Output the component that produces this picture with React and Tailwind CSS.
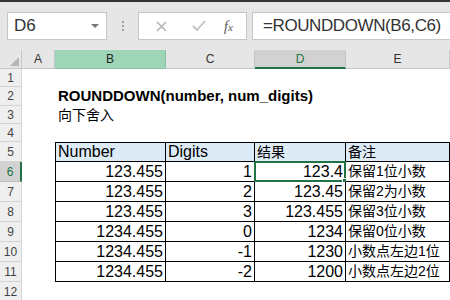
import React from 'react';

const latin = { fontFamily: '"Liberation Sans", "Noto Sans CJK SC", sans-serif' };

const cols = [
    { key: 'A', w: 'w-[33px]' },
    { key: 'B', w: 'w-[111px]' },
    { key: 'C', w: 'w-[89px]' },
    { key: 'D', w: 'w-[91px]' },
    { key: 'E', w: 'w-[104px]' },
];

const rows = [
    ['123.455', '1', '123.4', '保留1位小数'],
    ['123.455', '2', '123.45', '保留2为小数'],
    ['123.455', '3', '123.455', '保留3位小数'],
    ['1234.455', '0', '1234', '保留0位小数'],
    ['1234.455', '-1', '1230', '小数点左边1位'],
    ['1234.455', '-2', '1200', '小数点左边2位'],
];

function RowHead({ n, h, active }) {
    return (
        <div
            className={`w-[22px] shrink-0 ${h} flex items-center justify-center text-[12px] border-b border-r ${active ? 'bg-[#d2d2d2] text-[#217346] border-r-2 border-r-[#217346] border-b-[#bdbdbd]' : 'bg-[#efefef] text-[#444] border-[#d4d4d4]'}`}
        >
            {n}
        </div>
    );
}

function FormulaBar() {
    return (
        <div className="h-[50px] bg-[#e6e6e6] border-t-2 border-[#333] flex pt-[10px] pl-[7px]">
            <div className="w-[100px] h-[28px] bg-white border border-[#c6c6c6] flex items-center justify-between pl-[6px] pr-[7px]">
                <span className="text-[17px] text-[#333]">D6</span>
                <span className="w-0 h-0 border-l-[4px] border-r-[4px] border-t-[4px] border-l-transparent border-r-transparent border-t-[#777]"></span>
            </div>
            <div className="w-[31px] h-[28px] flex flex-col items-center justify-center gap-[2px]">
                <span className="w-[2px] h-[2px] bg-[#a0a0a0]"></span>
                <span className="w-[2px] h-[2px] bg-[#a0a0a0]"></span>
                <span className="w-[2px] h-[2px] bg-[#a0a0a0]"></span>
            </div>
            <div className="w-[109px] h-[28px] bg-white border border-[#c6c6c6] flex items-center justify-around px-[4px]">
                <svg width="11" height="11" viewBox="0 0 11 11" className="ml-[4px]">
                    <path d="M1 1 L10 10 M10 1 L1 10" stroke="#b4b4b4" strokeWidth="1.6" />
                </svg>
                <svg width="14" height="12" viewBox="0 0 14 12" className="ml-[6px]">
                    <path d="M1 6 L5 10 L13 1" stroke="#c2c2c2" strokeWidth="1.8" fill="none" />
                </svg>
                <span className="text-[14px] italic text-[#555] font-['Liberation_Serif',serif]">
                    f<span className="text-[11px]">x</span>
                </span>
            </div>
            <div className="ml-[5px] flex-1 h-[28px] bg-white border border-[#c6c6c6] border-r-0 flex items-center pl-[10px]">
                <span className="text-[17px] text-[#333] tracking-[-0.4px]">=ROUNDDOWN(B6,C6)</span>
            </div>
        </div>
    );
}

function ColHeads() {
    return (
        <div className="flex h-[19px] bg-[#e6e6e6]">
            <div className="w-[22px] shrink-0 bg-[#e6e6e6] border-r border-b border-[#c6c6c6] flex items-end justify-end pr-[2px] pb-[2px]">
                <svg width="9" height="9" viewBox="0 0 10 10">
                    <path d="M10 0 L10 10 L0 10 Z" fill="#b5b5b5" />
                </svg>
            </div>
            {cols.map((c) => (
                <div
                    key={c.key}
                    className={`${c.w} shrink-0 flex items-center justify-center text-[12px] border-r ${c.key === 'B' ? 'bg-[#9fd5b7] text-[#222] border-b border-[#8cc3a4]' : c.key === 'D' ? 'bg-[#d2d2d2] text-[#217346] border-b-2 border-b-[#217346] border-r-[#c6c6c6]' : 'bg-[#e6e6e6] text-[#333] border-b border-[#c6c6c6]'}`}
                >
                    {c.key}
                </div>
            ))}
        </div>
    );
}

function EmptyRow({ n, h, children }) {
    return (
        <div className="flex">
            <RowHead n={n} h={h} />
            <div className={`flex-1 ${h} bg-white flex items-center pl-[36px]`}>{children}</div>
        </div>
    );
}

function Cell({ w, right, top, first, cjk, children, selected }) {
    return (
        <div
            className={`${w} h-[20px] shrink-0 relative border-black border-b border-r ${first ? 'border-l' : ''} ${top ? 'border-t bg-[#ddebf7]' : 'bg-white'} flex items-center px-[2px] ${cjk ? 'text-[14px]' : 'text-[16px]'} whitespace-nowrap text-black ${right ? 'justify-end' : 'justify-start'}`}
        >
            {children}
            {selected && (
                <div className="absolute -left-px -top-px -right-px -bottom-px border-2 border-[#217346]">
                    <span className="absolute -right-[4px] -bottom-[4px] w-[6px] h-[6px] bg-[#217346] border border-white"></span>
                </div>
            )}
        </div>
    );
}

export default function App() {
    return (
        <div className="w-[450px] h-[300px] overflow-hidden bg-white" style={latin}>
            <FormulaBar />
            <ColHeads />
            <EmptyRow n="1" h="h-[18px]" />
            <EmptyRow n="2" h="h-[19px]">
                <span className="text-[15px] font-bold text-black whitespace-nowrap">ROUNDDOWN(number, num_digits)</span>
            </EmptyRow>
            <EmptyRow n="3" h="h-[18px]">
                <span className="text-[14px] text-black">向下舍入</span>
            </EmptyRow>
            <EmptyRow n="4" h="h-[18px]" />
            <div className="flex">
                <RowHead n="5" h="h-[20px]" />
                <div className="w-[33px] h-[20px] shrink-0 bg-white"></div>
                <Cell w="w-[111px]" top first>Number</Cell>
                <Cell w="w-[89px]" top>Digits</Cell>
                <Cell w="w-[91px]" top cjk>结果</Cell>
                <Cell w="w-[104px]" top cjk>备注</Cell>
            </div>
            {rows.map((r, i) => (
                <div className="flex" key={i}>
                    <RowHead n={String(i + 6)} h="h-[20px]" active={i === 0} />
                    <div className="w-[33px] h-[20px] shrink-0 bg-white"></div>
                    <Cell w="w-[111px]" right first>{r[0]}</Cell>
                    <Cell w="w-[89px]" right>{r[1]}</Cell>
                    <Cell w="w-[91px]" right selected={i === 0}>{r[2]}</Cell>
                    <Cell w="w-[104px]" cjk>{r[3]}</Cell>
                </div>
            ))}
            <EmptyRow n="12" h="h-[20px]" />
        </div>
    );
}
